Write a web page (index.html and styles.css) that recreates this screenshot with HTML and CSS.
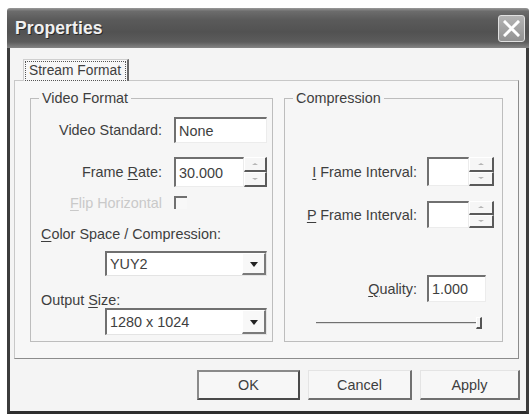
FILE: index.html
```html
<!DOCTYPE html>
<html>
<head>
<meta charset="utf-8">
<link rel="stylesheet" href="styles.css">
</head>
<body>
<div class="window">
  <div class="titlebar">
    <span class="title">Properties</span>
    <span class="close"><svg width="17" height="17" viewBox="0 0 17 17"><path d="M2 2 L15 15 M15 2 L2 15" stroke="#fff" stroke-width="3" stroke-linecap="square"/></svg></span>
  </div>
  <div class="frame">
    <div class="tabs">
      <div class="tab"><span class="focus">Stream Format</span></div>
    </div>
    <div class="panel">
      <div class="group vf">
        <div class="legend">Video Format</div>
        <div class="row r1">
          <span class="lbl">Video Standard:</span>
          <span class="box w93">None</span>
        </div>
        <div class="row r2">
          <span class="lbl">Frame <u>R</u>ate:</span>
          <span class="box w70">30.000</span>
          <span class="spin"><span class="sb up"><i class="au"></i></span><span class="sb dn"><i class="ad"></i></span></span>
        </div>
        <div class="row r3">
          <span class="lbl dis"><u>F</u>lip Horizontal</span>
          <span class="check"></span>
        </div>
        <div class="text t1"><u>C</u>olor Space / Compression:</div>
        <div class="combo c1"><span class="cval">YUY2</span><span class="cbtn"><i class="tri"></i></span></div>
        <div class="text t2">Output <u>S</u>ize:</div>
        <div class="combo c2"><span class="cval">1280 x 1024</span><span class="cbtn"><i class="tri"></i></span></div>
      </div>
      <div class="group cp">
        <div class="legend">Compression</div>
        <div class="row q1">
          <span class="lbl2"><u>I</u> Frame Interval:</span>
          <span class="box w42"></span>
          <span class="spin s25"><span class="sb up"><i class="au"></i></span><span class="sb dn"><i class="ad"></i></span></span>
        </div>
        <div class="row q2">
          <span class="lbl2"><u>P</u> Frame Interval:</span>
          <span class="box w42"></span>
          <span class="spin s25"><span class="sb up"><i class="au"></i></span><span class="sb dn"><i class="ad"></i></span></span>
        </div>
        <div class="row q3">
          <span class="lbl2"><u>Q</u>uality:</span>
          <span class="box w59">1.000</span>
        </div>
        <div class="slider"><span class="track"></span><span class="thumb"></span></div>
      </div>
    </div>
    <div class="buttons">
      <span class="btn ok">OK</span>
      <span class="btn cancel">Cancel</span>
      <span class="btn apply">Apply</span>
    </div>
  </div>
</div>
</body>
</html>
```
FILE: styles.css
```css
html, body {
  margin: 0;
  padding: 0;
  background: #ffffff;
}
body {
  font-family: "Liberation Sans", Arial, sans-serif;
  font-size: 14.4px;
  color: #3e3e3e;
}
u { text-decoration: underline; text-underline-offset: 2px; }

.window {
  margin: 8px 0 0 7px;
  width: 522px;
}
.titlebar {
  height: 40px;
  box-sizing: border-box;
  display: flex;
  align-items: center;
  justify-content: space-between;
  padding: 0 4px 0 8px;
  background: linear-gradient(#9a9a9a 0, #6c6c6c 8%, #5a5a5a 30%, #525252 60%, #5c5c5c 85%, #858585 100%);
  border-radius: 3px 3px 0 0;
}
.title {
  font-weight: bold;
  font-size: 17.5px;
  color: #f0f0f0;
  text-shadow: 1px 1px 0 #2a2a2a;
  letter-spacing: 0.1px;
}
.close {
  width: 27px;
  height: 27px;
  box-sizing: border-box;
  border: 1px solid #e0e0e0;
  border-radius: 3px;
  background: linear-gradient(#b4b4b4, #929292);
  display: flex;
  align-items: center;
  justify-content: center;
  margin-top: 1px;
}

.frame {
  height: 363px;
  border-left: 3px solid #3c3c3c;
  border-right: 3px solid #3c3c3c;
  border-bottom: 3px solid #2e2e2e;
  background: #f4f4f4;
}

.tabs {
  padding: 11px 0 0 13px;
  display: flex;
  position: relative;
  z-index: 1;
}
.tab {
  width: 106px;
  height: 22px;
  box-sizing: border-box;
  border-top: 1px solid #cfcfcf;
  border-left: 1px solid #cfcfcf;
  border-right: 2px solid #6a6a6a;
  background: #f7f7f7;
  padding: 1px 1px 0 1px;
  display: flex;
}
.focus {
  flex: 1;
  border: 1px dotted #555;
  padding-left: 3px;
  font-size: 13.8px;
  line-height: 17px;
  white-space: nowrap;
  overflow: hidden;
}

.panel {
  margin: -1px 0 0 4px;
  width: 505px;
  height: 279px;
  box-sizing: border-box;
  border: 1px solid #c8c8c8;
  border-right-color: #8c8c8c;
  border-bottom-color: #8c8c8c;
  background: #f7f7f7;
  display: flex;
  align-items: flex-start;
  padding: 17px 0 0 15px;
}

.group {
  border: 1px solid #bdbdbd;
  box-sizing: border-box;
  height: 244px;
  background: #f6f6f6;
}
.vf { width: 243px; }
.cp { width: 219px; margin-left: 11px; }
.legend {
  display: table;
  margin: -9px 0 0 8px;
  padding: 0 3px;
  line-height: 16px;
  background: #f6f6f6;
}

.row {
  display: flex;
  align-items: center;
}
.lbl {
  width: 131px;
  text-align: right;
  margin-right: 12px;
  white-space: nowrap;
}
.lbl2 {
  width: 132px;
  text-align: right;
  margin-right: 10px;
  white-space: nowrap;
}
.dis { color: #c9c9c9; }

.box {
  align-self: stretch;
  box-sizing: border-box;
  background: #ffffff;
  border-top: 2px solid #707070;
  border-left: 2px solid #707070;
  border-right: 1px solid #ececec;
  border-bottom: 1px solid #ececec;
  padding-left: 3px;
  display: flex;
  align-items: center;
  white-space: nowrap;
}
.w93 { width: 93px; }
.w70 { width: 70px; }
.w42 { width: 42px; }
.w59 { width: 59px; }

.r1 { margin-top: 11px; height: 26px; }
.r2 { margin-top: 14px; height: 30px; }
.r3 { margin-top: 9px; height: 13px; }
.q1 { margin-top: 51px; height: 29px; }
.q2 { margin-top: 15px; height: 27px; }
.q3 { margin-top: 47px; height: 27px; }

.spin {
  align-self: stretch;
  width: 23px;
  display: flex;
  flex-direction: column;
}
.s25 { width: 25px; }
.sb {
  flex: 1;
  box-sizing: border-box;
  border-top: 1px solid #ffffff;
  border-left: 1px solid #ffffff;
  border-right: 2px solid #5a5a5a;
  border-bottom: 2px solid #5a5a5a;
  background: #f6f6f6;
  display: flex;
  align-items: center;
  justify-content: center;
}
.au, .ad {
  width: 0;
  height: 0;
  border-left: 3px solid transparent;
  border-right: 3px solid transparent;
}
.au { border-bottom: 2px solid #b5b5b5; }
.ad { border-top: 2px solid #b5b5b5; }

.check {
  width: 13px;
  height: 13px;
  box-sizing: border-box;
  border-top: 2px solid #707070;
  border-left: 2px solid #707070;
  background: #f8f8f8;
}

.text {
  line-height: 16px;
  padding-left: 10px;
  white-space: nowrap;
}
.t1 { margin-top: 17px; }
.t2 { margin-top: 16px; }

.combo {
  margin-left: 74px;
  width: 162px;
  box-sizing: border-box;
  background: #ffffff;
  border-top: 2px solid #707070;
  border-left: 2px solid #707070;
  border-right: 1px solid #e4e4e4;
  border-bottom: 1px solid #e4e4e4;
  display: flex;
}
.c1 { margin-top: 9px; height: 25px; }
.c2 { margin-top: 0; height: 27px; }
.cval {
  flex: 1;
  display: flex;
  align-items: center;
  padding-left: 3px;
  white-space: nowrap;
}
.cbtn {
  width: 24px;
  box-sizing: border-box;
  border-top: 1px solid #ffffff;
  border-left: 1px solid #ffffff;
  border-right: 2px solid #7a7a7a;
  border-bottom: 2px solid #7a7a7a;
  background: #f8f8f8;
  display: flex;
  align-items: center;
  justify-content: center;
}
.tri {
  width: 0;
  height: 0;
  border-left: 4px solid transparent;
  border-right: 4px solid transparent;
  border-top: 5px solid #222;
  margin-top: 2px;
}

.slider {
  margin: 14px 0 0 31px;
  width: 166px;
  height: 13px;
  display: flex;
  align-items: center;
}
.track {
  flex: 1;
  height: 0;
  border-top: 1px solid #707070;
  border-bottom: 1px solid #dcdcdc;
}
.thumb {
  width: 6px;
  height: 12px;
  box-sizing: border-box;
  border-right: 2px solid #555;
  border-bottom: 2px solid #555;
  border-top: 1px solid #fff;
  border-left: 1px solid #fff;
  background: #f4f4f4;
}

.buttons {
  display: flex;
  justify-content: flex-end;
  gap: 8px;
  margin-top: 11px;
  padding-right: 6px;
}
.btn {
  height: 30px;
  box-sizing: border-box;
  display: flex;
  align-items: center;
  justify-content: center;
  background: #f7f7f7;
  border-top: 1px solid #e4e4e4;
  border-left: 1px solid #e4e4e4;
  border-right: 2px solid #707070;
  border-bottom: 2px solid #707070;
}
.ok {
  width: 103px;
  border: 2px solid #4a4a4a;
  border-top-color: #8a8a8a;
  border-left-color: #8a8a8a;
}
.cancel { width: 104px; }
.apply { width: 100px; }
```
